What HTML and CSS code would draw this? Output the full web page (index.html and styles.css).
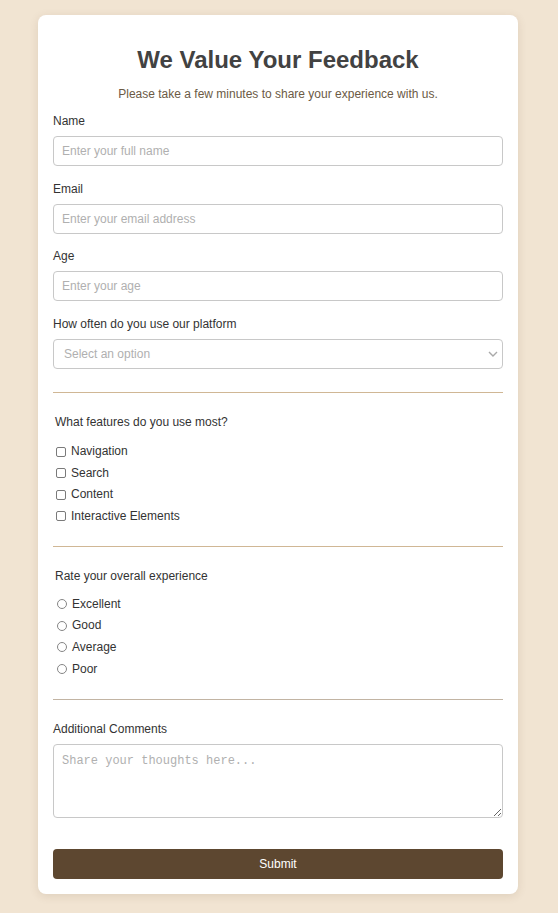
FILE: index.html
```html
<!DOCTYPE html>
<html lang="en">
<head>
<meta charset="utf-8">
<title>Feedback</title>
<link rel="stylesheet" href="styles.css">
</head>
<body>
<main class="card">
  <h1 class="title">We Value Your Feedback</h1>
  <p class="subtitle">Please take a few minutes to share your experience with us.</p>
  <form class="form">
    <div class="fields">
      <div class="field">
        <label class="label" for="name">Name</label>
        <input class="input" id="name" type="text" placeholder="Enter your full name">
      </div>
      <div class="field">
        <label class="label" for="email">Email</label>
        <input class="input" id="email" type="email" placeholder="Enter your email address">
      </div>
      <div class="field">
        <label class="label" for="age">Age</label>
        <input class="input" id="age" type="text" placeholder="Enter your age">
      </div>
      <div class="field">
        <label class="label" for="freq">How often do you use our platform</label>
        <div class="select-wrap">
          <select class="input select" id="freq">
            <option>Select an option</option>
          </select>
          <svg class="chevron" width="10" height="6" viewBox="0 0 10 6"><path d="M1 1l4 4 4-4" fill="none" stroke="#a9a9a9" stroke-width="1.4"/></svg>
        </div>
      </div>
    </div>

    <hr class="divider">

    <div class="group">
      <p class="group-title">What features do you use most?</p>
      <label class="option"><input type="checkbox" class="check"> Navigation</label>
      <label class="option"><input type="checkbox" class="check"> Search</label>
      <label class="option"><input type="checkbox" class="check"> Content</label>
      <label class="option"><input type="checkbox" class="check"> Interactive Elements</label>
    </div>

    <hr class="divider">

    <div class="group radios">
      <p class="group-title">Rate your overall experience</p>
      <label class="option"><input type="radio" name="rate" class="radio"> Excellent</label>
      <label class="option"><input type="radio" name="rate" class="radio"> Good</label>
      <label class="option"><input type="radio" name="rate" class="radio"> Average</label>
      <label class="option"><input type="radio" name="rate" class="radio"> Poor</label>
    </div>

    <hr class="divider divider-gray">

    <div class="field">
      <label class="label" for="comments">Additional Comments</label>
      <textarea class="input textarea" id="comments" placeholder="Share your thoughts here..."></textarea>
    </div>

    <button class="submit" type="button">Submit</button>
  </form>
</main>
</body>
</html>
```

FILE: styles.css
```css
* { box-sizing: border-box; }

body {
  margin: 0;
  padding: 15px 2px 20px 0;
  background: #f1e4d2;
  font-family: "Liberation Sans", Arial, sans-serif;
  color: #333;
}

.card {
  width: 480px;
  margin: 0 auto;
  background: #fff;
  border-radius: 8px;
  padding: 15px;
  box-shadow: 0 2px 10px rgba(90, 60, 30, 0.12);
}

.title {
  margin: 16px 0 13px;
  font-size: 24px;
  line-height: 28px;
  font-weight: bold;
  text-align: center;
  color: #424242;
}

.subtitle {
  margin: 0 0 13px;
  font-size: 12px;
  line-height: 14px;
  text-align: center;
  color: #6b5a45;
}

.form {
  display: flex;
  flex-direction: column;
}

.fields {
  display: flex;
  flex-direction: column;
  gap: 15.7px;
  margin-bottom: 1px;
}

.field {
  display: flex;
  flex-direction: column;
}

.label {
  font-size: 12px;
  line-height: 15px;
  margin-bottom: 7px;
  color: #333;
}

.input {
  width: 100%;
  height: 30px;
  border: 1px solid #c8c8c8;
  border-radius: 4px;
  padding: 0 8px;
  font-family: "Liberation Sans", Arial, sans-serif;
  font-size: 12px;
  color: #333;
  background: #fff;
  outline: none;
}

.input::placeholder { color: #b0b0b0; }

.select-wrap { position: relative; }

.select {
  appearance: none;
  -webkit-appearance: none;
  padding-left: 10px;
  color: #b0b0b0;
}

.chevron {
  position: absolute;
  right: 5px;
  top: 12px;
}

.divider {
  border: 0;
  border-top: 1px solid #d0b795;
  margin: 22px 0;
  height: 0;
}

.divider-gray { border-top-color: #c2b4a3; }

.group {
  display: flex;
  flex-direction: column;
  padding-left: 2px;
}

.group-title {
  margin: 0 0 14px;
  font-size: 12px;
  line-height: 15px;
  color: #333;
}

.radios .group-title { margin-bottom: 13px; }

.option {
  display: flex;
  align-items: center;
  gap: 5px;
  font-size: 12px;
  line-height: 15px;
  color: #333;
  margin-bottom: 6.5px;
}

.radios .option { margin-bottom: 6.67px; }

.option:last-child, .radios .option:last-child { margin-bottom: 0; }

.check, .radio {
  appearance: none;
  -webkit-appearance: none;
  margin: 0 0 0 1px;
  width: 10px;
  height: 10px;
  border: 1px solid #7a7a7a;
  background: #fff;
  flex: none;
}

.check { border-radius: 2px; }

.radio {
  border-radius: 50%;
  margin-left: 2px;
  border-color: #858585;
}

.textarea {
  height: 74px;
  padding: 9px 8px 6px;
  font-family: "Liberation Mono", "DejaVu Sans Mono", monospace;
  font-size: 12px;
  resize: vertical;
}

.submit {
  margin-top: 31px;
  height: 30px;
  width: 100%;
  border: 0;
  border-radius: 4px;
  background: #5d4730;
  color: #fff;
  font-family: "Liberation Sans", Arial, sans-serif;
  font-size: 12px;
}
```
